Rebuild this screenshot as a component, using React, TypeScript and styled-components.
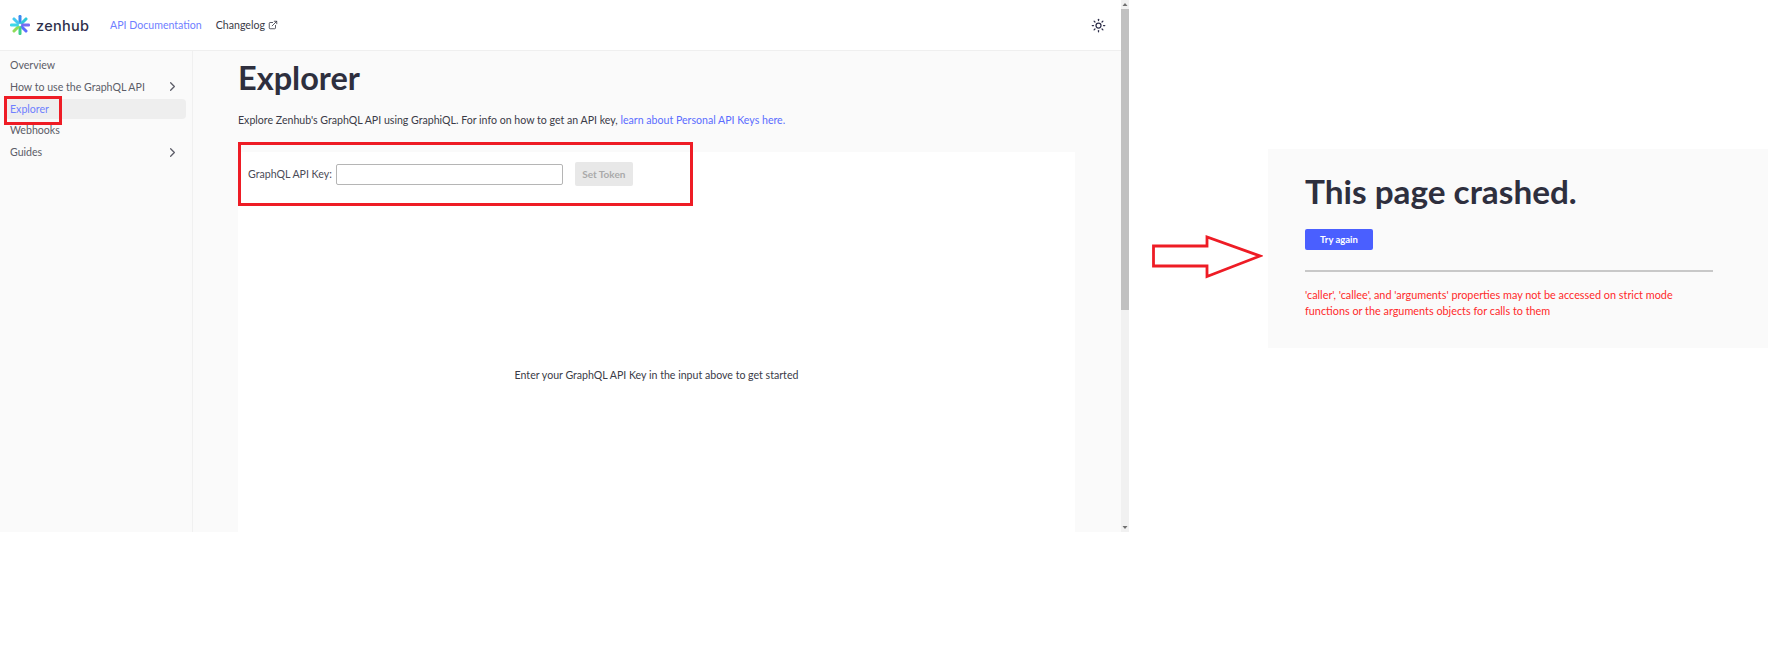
import React from "react";
import styled, { createGlobalStyle } from "styled-components";
import { ChevronRight, ExternalLink, Sun } from "lucide-react";

const GlobalStyle = createGlobalStyle`
  html, body {
    margin: 0;
    padding: 0;
    background: #fff;
  }
  body {
    font-family: "Lato", "Open Sans", sans-serif;
    color: #2e2f3e;
  }
`;

const Page = styled.div`
  display: flex;
  width: 1768px;
  height: 646px;
  overflow: hidden;
  background: #fff;
`;

const Browser = styled.div`
  position: relative;
  display: flex;
  flex: 0 0 1129px;
  height: 532px;
  overflow: hidden;
`;

const Site = styled.div`
  flex: 1;
  display: flex;
  flex-direction: column;
  min-width: 0;
  background: #fafafa;
`;

const Header = styled.header`
  display: flex;
  align-items: center;
  flex: 0 0 50px;
  padding: 0 15px 0 10px;
  background: #fff;
  border-bottom: 1px solid #efefef;
`;

const Logo = styled.div`
  display: flex;
  align-items: center;
  gap: 6px;
  width: 100px;
`;

const LogoText = styled.span`
  font-family: "Inter", sans-serif;
  font-size: 14.5px;
  font-weight: 500;
  letter-spacing: 0.3px;
  color: #2e2f4a;
`;

const TopLink = styled.a<{ $active?: boolean }>`
  display: flex;
  align-items: center;
  gap: 3px;
  margin-right: 14px;
  font-size: 10.6px;
  color: ${(p) => (p.$active ? "#6f80ff" : "#3a3b47")};
`;

const ThemeButton = styled.div`
  display: flex;
  margin-left: auto;
  color: #2e2f4a;
`;

const Body = styled.div`
  flex: 1;
  display: flex;
  min-height: 0;
`;

const Sidebar = styled.nav`
  flex: 0 0 193px;
  box-sizing: border-box;
  padding: 4px 6px 0 5px;
  border-right: 1px solid #f0f0f0;
`;

const NavItem = styled.div<{ $active?: boolean }>`
  display: flex;
  align-items: center;
  justify-content: space-between;
  height: 20px;
  margin-bottom: 1.8px;
  padding: 0 6px 0 5px;
  border-radius: 4px;
  font-size: 10.6px;
  white-space: nowrap;
  color: ${(p) => (p.$active ? "#6f80ff" : "#5c5d68")};
  background: ${(p) => (p.$active ? "#eeeeee" : "transparent")};
`;

const Main = styled.main`
  flex: 1;
  display: flex;
  flex-direction: column;
  min-width: 0;
  padding: 0 46px 0 45px;
`;

const Title = styled.h1`
  margin: 4px 0 0;
  font-size: 32.5px;
  line-height: 46px;
  font-weight: 700;
  color: #2e2f3e;
`;

const Intro = styled.p`
  margin: 11px 0 0;
  font-size: 10.6px;
  line-height: 16px;
  color: #3a3b47;
`;

const InlineLink = styled.a`
  color: #5a6dff;
`;

const Card = styled.section`
  flex: 1;
  display: flex;
  flex-direction: column;
  margin-top: 24px;
  background: #fff;
`;

const TokenRow = styled.div`
  display: flex;
  align-items: center;
  padding: 10px 0 0 10px;
`;

const TokenLabel = styled.label`
  margin-right: 4px;
  font-size: 10.6px;
  color: #4a4b57;
`;

const TokenInput = styled.input`
  box-sizing: border-box;
  width: 227px;
  height: 21px;
  margin-right: 12px;
  padding: 0 6px;
  border: 1px solid #b5b5b5;
  border-radius: 2px;
  background: #fff;
`;

const TokenButton = styled.button`
  width: 58px;
  height: 24px;
  padding: 0;
  border: 0;
  border-radius: 2px;
  font-family: inherit;
  font-size: 10px;
  font-weight: 700;
  color: #aaaaaa;
  background: #e8e8e8;
`;

const Placeholder = styled.div`
  margin-top: 183px;
  text-align: center;
  font-size: 10.6px;
  color: #3a3b47;
`;

const Scrollbar = styled.div`
  display: flex;
  flex-direction: column;
  align-items: center;
  flex: 0 0 8px;
  background: #f1f1f1;
`;

const ScrollArrow = styled.svg`
  flex: 0 0 9px;
  width: 8px;
  height: 9px;
`;

const ScrollThumb = styled.div`
  flex: 0 0 301px;
  width: 100%;
  background: #c1c1c1;
`;

const ScrollSpace = styled.div`
  flex: 1;
`;

const Highlight = styled.div<{ $x: number; $y: number; $w: number; $h: number }>`
  position: absolute;
  box-sizing: border-box;
  left: ${(p) => p.$x}px;
  top: ${(p) => p.$y}px;
  width: ${(p) => p.$w}px;
  height: ${(p) => p.$h}px;
  border: 3px solid #ee1c25;
  pointer-events: none;
`;

const Aside = styled.div`
  flex: 1;
  display: flex;
  align-items: flex-start;
  min-width: 0;
  padding: 149px 0 0 23px;
`;

const Arrow = styled.svg`
  flex: 0 0 111px;
  height: 44px;
  margin-top: 86px;
  margin-right: 5px;
`;

const CrashPanel = styled.section`
  flex: 1;
  box-sizing: border-box;
  height: 199px;
  padding: 18px 55px 0 37px;
  background: #fafafa;
`;

const CrashTitle = styled.h2`
  margin: 0;
  font-size: 33.3px;
  line-height: 48px;
  font-weight: 700;
  color: #2e2f3e;
`;

const RetryButton = styled.button`
  display: block;
  width: 68px;
  height: 21px;
  margin-top: 14px;
  padding: 0;
  border: 0;
  border-radius: 2px;
  font-family: inherit;
  font-size: 9.5px;
  font-weight: 700;
  color: #fff;
  background: #4a5fff;
`;

const Divider = styled.hr`
  height: 2px;
  margin: 20px 0 0;
  border: 0;
  background: #c8c8c8;
`;

const ErrorText = styled.p`
  max-width: 395px;
  margin: 15px 0 0;
  font-size: 10.85px;
  line-height: 16px;
  color: #ff2a2a;
`;

const RAYS = [
  { angle: 0, color: "#3b8cf0" },
  { angle: 45, color: "#2fc7d9" },
  { angle: 90, color: "#7a6cf0" },
  { angle: 135, color: "#5a6dff" },
  { angle: 180, color: "#3ecf8e" },
  { angle: 225, color: "#8fdc5a" },
  { angle: 270, color: "#3fd8e8" },
  { angle: 315, color: "#45c8f0" },
];

function ZenhubMark() {
  return (
    <svg width="20" height="20" viewBox="0 0 20 20">
      {RAYS.map((ray) => (
        <rect
          key={ray.angle}
          x="8.5"
          y="0"
          width="3"
          height="8.8"
          rx="1.2"
          fill={ray.color}
          transform={`rotate(${ray.angle} 10 10)`}
        />
      ))}
    </svg>
  );
}

function App() {
  return (
    <Page>
      <GlobalStyle />
      <Browser>
        <Site>
          <Header>
            <Logo>
              <ZenhubMark />
              <LogoText>zenhub</LogoText>
            </Logo>
            <TopLink $active>API Documentation</TopLink>
            <TopLink>
              Changelog
              <ExternalLink size={10} />
            </TopLink>
            <ThemeButton>
              <Sun size={15} />
            </ThemeButton>
          </Header>
          <Body>
            <Sidebar>
              <NavItem>Overview</NavItem>
              <NavItem>
                How to use the GraphQL API
                <ChevronRight size={15} />
              </NavItem>
              <NavItem $active>Explorer</NavItem>
              <NavItem>Webhooks</NavItem>
              <NavItem>
                Guides
                <ChevronRight size={15} />
              </NavItem>
            </Sidebar>
            <Main>
              <Title>Explorer</Title>
              <Intro>
                Explore Zenhub's GraphQL API using GraphiQL. For info on how to get an API key,{" "}
                <InlineLink>learn about Personal API Keys here.</InlineLink>
              </Intro>
              <Card>
                <TokenRow>
                  <TokenLabel>GraphQL API Key:</TokenLabel>
                  <TokenInput />
                  <TokenButton disabled>Set Token</TokenButton>
                </TokenRow>
                <Placeholder>Enter your GraphQL API Key in the input above to get started</Placeholder>
              </Card>
            </Main>
          </Body>
        </Site>
        <Scrollbar>
          <ScrollArrow viewBox="0 0 8 9">
            <path d="M4 3 L6.5 6 L1.5 6 Z" fill="#707070" />
          </ScrollArrow>
          <ScrollThumb />
          <ScrollSpace />
          <ScrollArrow viewBox="0 0 8 9">
            <path d="M4 6 L6.5 3 L1.5 3 Z" fill="#707070" />
          </ScrollArrow>
        </Scrollbar>
        <Highlight $x={4} $y={96} $w={58} $h={29} />
        <Highlight $x={238} $y={142} $w={455} $h={64} />
      </Browser>
      <Aside>
        <Arrow viewBox="0 0 111 44">
          <path d="M1.5 11 H55 V2 L108 21 L55 41.5 V31 H1.5 Z" fill="#fff" stroke="#ee1c25" strokeWidth="2.8" />
        </Arrow>
        <CrashPanel>
          <CrashTitle>This page crashed.</CrashTitle>
          <RetryButton>Try again</RetryButton>
          <Divider />
          <ErrorText>
            'caller', 'callee', and 'arguments' properties may not be accessed on strict mode functions or the arguments objects for calls to them
          </ErrorText>
        </CrashPanel>
      </Aside>
    </Page>
  );
}

export default App;
